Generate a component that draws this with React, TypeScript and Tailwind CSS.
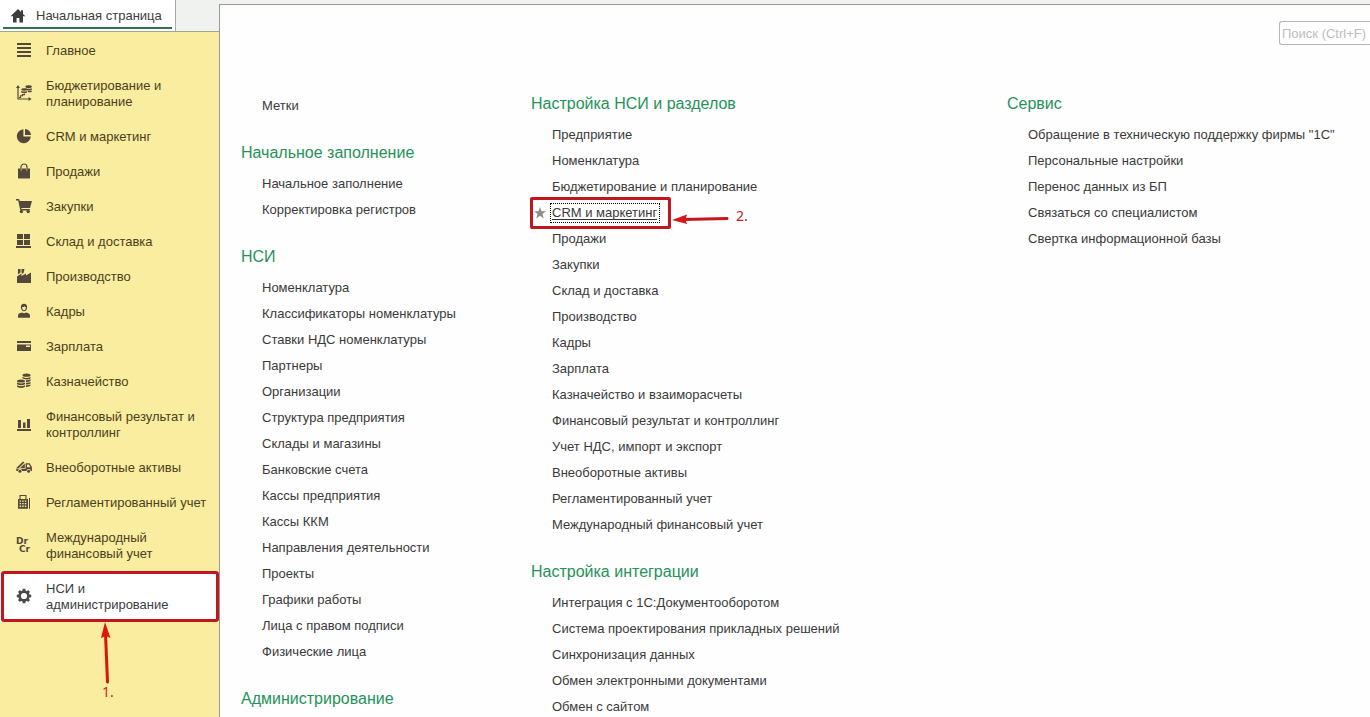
import type { ReactNode } from "react";

type NavItem = { label: string; icon: ReactNode; active?: boolean };
type Section = { title?: string; items: string[] };

function Glyph({ children }: { children: ReactNode }) {
  return (
    <svg viewBox="0 0 16 16" className="h-4 w-4 shrink-0" fill="currentColor" aria-hidden="true">
      {children}
    </svg>
  );
}

const HomeIcon = (
  <Glyph>
    <path d="M8 1 L0.6 8.2 H3 V14.5 H6.6 V10 H9.4 V14.5 H13 V8.2 H15.4 L13 5.9 V2.2 H11 V4 Z" />
  </Glyph>
);

const MenuIcon = (
  <Glyph>
    <path d="M1 1h14v2H1zM1 5h14v2H1zM1 9h14v2H1zM1 13h14v2H1z" />
  </Glyph>
);

const BudgetIcon = (
  <Glyph>
    <path d="M2 0 L4 3 H2.6 V13.4 H12.6 V12 L15.6 14 L12.6 16 V14.6 H1.4 V3 H0 Z" />
    <path d="M3 12.500 H4.500 V10.800 H6.500 V9.600 H8.500 V8.500" fill="none" stroke="currentColor" strokeWidth="1.100" />
    <ellipse cx="12.6" cy="1.7" rx="3.2" ry="1.4" />
    <path d="M9.6 3.2q3 1.3 6.200 0v1.600q-3 1.400-6.200 0z" />
    <ellipse cx="8.2" cy="4.500" rx="3" ry="1.300" />
    <path d="M5.200 5.900q3 1.400 6 0v1.500q-3 1.400-6 0zM12 5.700q2 .3 3.800-.3v1.300q-1.800.8-3.800.4z" />
  </Glyph>
);

const PieIcon = (
  <Glyph>
    <path d="M7.400 1.200 V8.600 H14.800 A7 7 0 1 1 7.400 1.200 Z" />
    <path d="M9 0.900 A6.400 6.400 0 0 1 15 7 H9 Z" />
  </Glyph>
);

const BagIcon = (
  <Glyph>
    <path d="M2 5.500h12V15.500H2z" />
    <path d="M5 6V4a3 3 0 0 1 6 0v2" fill="none" stroke="currentColor" strokeWidth="1.200" />
    <path d="M5.200 5.500v2.200M10.800 5.500v2.200" stroke="#faed9f" strokeWidth="0.700" />
  </Glyph>
);

const CartIcon = (
  <Glyph>
    <path d="M0 1h3l.8 1.900H16l-2 7H5.200l.3 1.100h8.300v1.400H4.300L2.200 2.500H0z" />
    <circle cx="5.400" cy="13.600" r="1.700" />
    <circle cx="12.200" cy="13.600" r="1.700" />
  </Glyph>
);

const WarehouseIcon = (
  <Glyph>
    <path d="M1 1h6v5H1zM8 1h6v5H8zM1 7h6v5H1zM8 7h6v5H8zM0 13h15v2H0z" />
  </Glyph>
);

const FactoryIcon = (
  <Glyph>
    <path d="M1 15V8.400L5.500 5.400V8L10 5.600V7.600L15 4.600V15z" />
    <path d="M2 1h2.500v3.600L2 6.400zM5.500 1H8.500L7.500 5 6.500 5.800 5.500 4.400z" />
  </Glyph>
);

const PersonIcon = (
  <Glyph>
    <path d="M8 .8c2.200 0 3.200 1.400 3.100 3.400C11 6.700 9.700 8.200 8 8.200S5 6.700 4.900 4.200C4.800 2.200 5.800.8 8 .8z" />
    <path d="M6.100 4.200c1.400 0 2-.4 2.500-.9.200.6.700.9 1.300.9 0 1.800-.8 3-1.900 3S6.200 6 6.100 4.200z" fill="#faed9f" />
    <path d="M2 14.800v-2.200c0-1.900 1.600-2.700 4-3.200Q8 11 10 9.400c2.400.5 4 1.300 4 3.200v2.200z" />
  </Glyph>
);

const CardIcon = (
  <Glyph>
    <path d="M1 3h14v2H1z" />
    <path fillRule="evenodd" d="M1 6.500h14V13H1zM10 7.600v1.400h4V7.600z" />
  </Glyph>
);

const CoinsIcon = (
  <Glyph>
    <ellipse cx="10.500" cy="2.200" rx="4" ry="1.600" />
    <path d="M6.500 4q4 2 8 0v1.500q-2.400 1.300-5.400.8L6.500 5.500zM10 7.100q2.600.2 4.500-.8v1.700q-1.800 1-4.500.9zM10 9.700q2.600.2 4.500-.8v1.700q-1.800 1-4.500.9zM10 12.300q2.600.2 4.500-.8v1.300q-1.800 1.300-4.500 1.100z" />
    <ellipse cx="5" cy="8" rx="4" ry="1.600" />
    <path d="M1 9.600q4 2 8 0v1.600q-4 2-8 0zM1 12.200q4 2 8 0v1.600q-4 2.400-8 0z" />
  </Glyph>
);

const ChartIcon = (
  <Glyph>
    <path d="M1 13h14v2H1zM2 4h3v8H2zM7 6.500h2.500V12H7zM11 3h3v9h-3z" />
  </Glyph>
);

const TruckIcon = (
  <Glyph>
    <path d="M0 9.300 7 2.400 8.400 3.500 2.600 9.300z" />
    <path d="M4.200 8.900 8.800 4.500V8.900z" />
    <path fillRule="evenodd" d="M9.600 4.300h4L15.900 8v4h-1.200a2.100 2.100 0 0 0-4.200 0H6a2.100 2.100 0 0 0-4.200 0H.3V9.800h9.300zM11 5.500v2.700h3.500L12.900 5.500z" />
    <circle cx="3.900" cy="12.300" r="1.500" />
    <circle cx="12.600" cy="12.300" r="1.500" />
  </Glyph>
);

const CalculatorIcon = (
  <Glyph>
    <path
      fillRule="evenodd"
      d="M3.500 1h7v4H12v9.800H2V5h1.500zM4.600 2v3h4.800V2zM3.600 6.500v1.300h1.500V6.500zM6.200 6.500v1.300h1.500V6.500zM8.800 6.500v1.300h1.500V6.500zM3.600 9v1.300h1.500V9zM6.200 9v1.300h1.500V9zM8.800 9v1.300h1.500V9zM3.600 11.600v1.300h1.500v-1.300zM6.200 11.600v1.300h1.500v-1.300zM8.800 11.600v1.300h1.500v-1.300z"
    />
    <path d="M13 4h1v10.800h-1z" />
  </Glyph>
);

const DrCrIcon = (
  <span className="flex w-4 shrink-0 flex-col font-['DejaVu_Sans',sans-serif] text-[9px] leading-[8px] font-bold" aria-hidden="true">
    <span>Dr</span>
    <span className="pl-[3px]">Cr</span>
  </span>
);

const toothAngles = [0, 45, 90, 135, 180, 225, 270, 315];

const GearIcon = (
  <Glyph>
    <circle cx="8" cy="8" r="4.400" fill="none" stroke="currentColor" strokeWidth="2.600" />
    {toothAngles.map((a) => (
      <rect key={a} x="6.600" y="0.800" width="2.800" height="2.600" transform={`rotate(${a} 8 8)`} />
    ))}
  </Glyph>
);

const nav: NavItem[] = [
  { label: "Главное", icon: MenuIcon },
  { label: "Бюджетирование и планирование", icon: BudgetIcon },
  { label: "CRM и маркетинг", icon: PieIcon },
  { label: "Продажи", icon: BagIcon },
  { label: "Закупки", icon: CartIcon },
  { label: "Склад и доставка", icon: WarehouseIcon },
  { label: "Производство", icon: FactoryIcon },
  { label: "Кадры", icon: PersonIcon },
  { label: "Зарплата", icon: CardIcon },
  { label: "Казначейство", icon: CoinsIcon },
  { label: "Финансовый результат и контроллинг", icon: ChartIcon },
  { label: "Внеоборотные активы", icon: TruckIcon },
  { label: "Регламентированный учет", icon: CalculatorIcon },
  { label: "Международный финансовый учет", icon: DrCrIcon },
  { label: "НСИ и администрирование", icon: GearIcon, active: true },
];

const columns: Section[][] = [
  [
    { items: ["Метки"] },
    { title: "Начальное заполнение", items: ["Начальное заполнение", "Корректировка регистров"] },
    {
      title: "НСИ",
      items: [
        "Номенклатура",
        "Классификаторы номенклатуры",
        "Ставки НДС номенклатуры",
        "Партнеры",
        "Организации",
        "Структура предприятия",
        "Склады и магазины",
        "Банковские счета",
        "Кассы предприятия",
        "Кассы ККМ",
        "Направления деятельности",
        "Проекты",
        "Графики работы",
        "Лица с правом подписи",
        "Физические лица",
      ],
    },
    { title: "Администрирование", items: [] },
  ],
  [
    {
      title: "Настройка НСИ и разделов",
      items: [
        "Предприятие",
        "Номенклатура",
        "Бюджетирование и планирование",
        "CRM и маркетинг",
        "Продажи",
        "Закупки",
        "Склад и доставка",
        "Производство",
        "Кадры",
        "Зарплата",
        "Казначейство и взаиморасчеты",
        "Финансовый результат и контроллинг",
        "Учет НДС, импорт и экспорт",
        "Внеоборотные активы",
        "Регламентированный учет",
        "Международный финансовый учет",
      ],
    },
    {
      title: "Настройка интеграции",
      items: [
        "Интеграция с 1С:Документооборотом",
        "Система проектирования прикладных решений",
        "Синхронизация данных",
        "Обмен электронными документами",
        "Обмен с сайтом",
      ],
    },
  ],
  [
    {
      title: "Сервис",
      items: [
        'Обращение в техническую поддержку фирмы "1С"',
        "Персональные настройки",
        "Перенос данных из БП",
        "Связаться со специалистом",
        "Свертка информационной базы",
      ],
    },
  ],
];

function NavEntry({ item }: { item: NavItem }) {
  return (
    <li className={item.active ? "relative bg-white text-[#3d3d3d]" : "text-[#4b3f1c]"}>
      <a href="#" className="flex items-center gap-[14px] pt-2 pr-3 pb-[9px] pl-4 leading-4">
        <span className={item.active ? "text-[#4a4a4a]" : "text-[#54483c]"}>{item.icon}</span>
        <span className="pt-0.5">{item.label}</span>
      </a>
      {item.active && (
        <>
          <span className="pointer-events-none absolute inset-y-0 right-0 left-px rounded-[3px] border-3 border-[#bf1620]" />
          <svg className="pointer-events-none absolute top-full left-[98px] h-16 w-4" viewBox="0 0 16 64" aria-hidden="true">
            <path d="M7.500 12 L9.500 60" stroke="#d8150c" strokeWidth="3" strokeLinecap="round" />
            <path d="M7 0 L12.500 16 L8 14 L3 16 Z" fill="#e0170e" />
          </svg>
          <span className="absolute top-full left-[102px] mt-[62px] font-['Noto_Sans',sans-serif] text-sm leading-4 text-[#c2281a]">
            1.
          </span>
        </>
      )}
    </li>
  );
}

function MarkedLink({ label }: { label: string }) {
  return (
    <li className="relative flex h-[26px] items-center">
      <a href="#" className="border-b border-[#333] leading-[13px]">
        {label}
      </a>
      <span className="pointer-events-none absolute -left-0.5 h-5 w-[110px] border border-dotted border-black" />
      <svg className="absolute -left-[18px] h-3 w-3" viewBox="0 0 12 12" fill="#8c8c8c" aria-hidden="true">
        <path d="M6 0 7.500 4.200H12L8.400 6.900 9.800 11.400 6 8.700 2.200 11.400 3.600 6.900 0 4.200H4.500Z" />
      </svg>
      <span className="pointer-events-none absolute -left-[22px] h-8 w-[141px] rounded-[2px] border-3 border-[#bf1620]" />
      <svg className="pointer-events-none absolute top-[13px] left-[120px] h-3 w-[60px]" viewBox="0 0 60 12" aria-hidden="true">
        <path d="M12 6.500 L55 5.500" stroke="#c8161c" strokeWidth="3" strokeLinecap="round" />
        <path d="M0 7 L15 1.500 L13.500 6.500 L15 11 Z" fill="#d8151b" />
      </svg>
      <span className="absolute top-2 left-[184px] font-['Noto_Sans',sans-serif] text-sm leading-4 text-[#b5232b]">2.</span>
    </li>
  );
}

function LinkSection({ section, marked }: { section: Section; marked?: string }) {
  return (
    <section>
      {section.title && <h2 className="text-base leading-9 text-[#25925a]">{section.title}</h2>}
      <ul className="pl-[21px]">
        {section.items.map((label) =>
          label === marked ? (
            <MarkedLink key={label} label={label} />
          ) : (
            <li key={label} className="leading-[26px] whitespace-nowrap">
              <a href="#">{label}</a>
            </li>
          ),
        )}
      </ul>
    </section>
  );
}

export default function App() {
  return (
    <div className="flex h-screen overflow-hidden bg-[#f0f2f0] font-['Liberation_Sans',Arial,sans-serif] text-[13px] text-[#3a3a3a]">
      <div className="flex w-[219px] shrink-0 flex-col">
        <header className="flex h-8 shrink-0 border-b border-[#a3a58c]">
          <button type="button" className="flex w-44 border-r border-[#a8a8a8] bg-white px-[3px]">
            <span className="flex h-[29px] grow items-center gap-[10px] border-b-2 border-[#2f7353] pt-1 pl-[7px] text-[#3d3d3d]">
              {HomeIcon}
              <span>Начальная страница</span>
            </span>
          </button>
        </header>
        <nav className="grow bg-[#faed9f] pt-px">
          <ul>
            {nav.map((item) => (
              <NavEntry key={item.label} item={item} />
            ))}
          </ul>
        </nav>
      </div>
      <main className="mt-1 min-w-0 grow overflow-hidden border-t border-l border-[#9a9a94] bg-[#fefefe]">
        <div className="flex justify-end pt-4 pb-[41px]">
          <input
            type="text"
            aria-label="Поиск (Ctrl+F)"
            placeholder="Поиск (Ctrl+F)"
            className="h-6 w-[91px] rounded-l-[3px] border border-r-0 border-[#b5b5b5] bg-white pl-0.5 placeholder:text-[#bdbdbd]"
          />
        </div>
        <div className="grid grid-cols-[290fr_476fr_363fr] pl-[21px]">
          {columns.map((sections, i) => (
            <div key={i} className={i === 0 ? "flex flex-col gap-4 pt-[7px]" : "flex flex-col gap-4"}>
              {sections.map((section, j) => (
                <LinkSection key={j} section={section} marked={i === 1 ? "CRM и маркетинг" : undefined} />
              ))}
            </div>
          ))}
        </div>
      </main>
    </div>
  );
}
